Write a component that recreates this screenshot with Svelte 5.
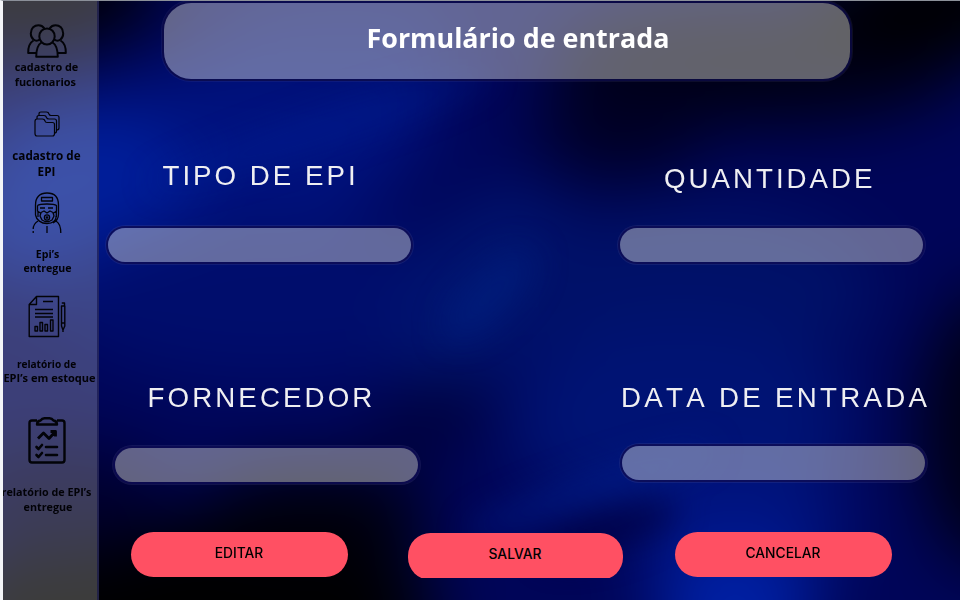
<script>
  const menu = [
    { icon: 'people', lines: ['cadastro de', 'fucionarios'] },
    { icon: 'folders', lines: ['cadastro de', 'EPI'] },
    { icon: 'worker', lines: ['Epi’s', 'entregue'] },
    { icon: 'report', lines: ['relatório de', 'EPI’s em estoque'] },
    { icon: 'clipboard', lines: ['relatório de EPI’s', 'entregue'] }
  ];
  const fields = [
    { id: 'tipo', label: 'TIPO DE EPI' },
    { id: 'quantidade', label: 'QUANTIDADE' },
    { id: 'fornecedor', label: 'FORNECEDOR' },
    { id: 'data', label: 'DATA DE ENTRADA' }
  ];
  const actions = ['EDITAR', 'SALVAR', 'CANCELAR'];
</script>

<div class="screen">
  <svg class="backdrop" viewBox="0 0 960 600" aria-hidden="true">
    <defs>
      <filter id="soft" filterUnits="userSpaceOnUse" x="-200" y="-200" width="1360" height="1000" color-interpolation-filters="sRGB"><feGaussianBlur stdDeviation="34" /></filter>
      <filter id="softer" filterUnits="userSpaceOnUse" x="-200" y="-200" width="1360" height="1000" color-interpolation-filters="sRGB"><feGaussianBlur stdDeviation="16" /></filter>
    </defs>
    <g filter="url(#soft)">
      <rect x="-150" y="-150" width="1260" height="900" fill="#000558" />
      <ellipse cx="190" cy="170" rx="260" ry="105" fill="#00127e" transform="rotate(-18 190 170)" />
      <ellipse cx="80" cy="190" rx="110" ry="85" fill="#001e9a" />
      <ellipse cx="270" cy="300" rx="220" ry="85" fill="#000d6c" />
      <ellipse cx="480" cy="290" rx="65" ry="115" fill="#001570" transform="rotate(35 480 290)" />
      <ellipse cx="345" cy="35" rx="120" ry="45" fill="#000e70" />
      <ellipse cx="760" cy="60" rx="210" ry="65" fill="#000014" />
      <ellipse cx="620" cy="130" rx="85" ry="50" fill="#000024" />
      <ellipse cx="960" cy="0" rx="150" ry="50" fill="#000" />
      <ellipse cx="690" cy="290" rx="190" ry="85" fill="#001168" />
      <ellipse cx="680" cy="420" rx="175" ry="100" fill="#001374" />
      <ellipse cx="740" cy="530" rx="110" ry="60" fill="#001380" />
      <ellipse cx="735" cy="615" rx="80" ry="70" fill="#0020a4" />
      <ellipse cx="995" cy="430" rx="75" ry="140" fill="#000014" />
      <ellipse cx="10" cy="-10" rx="150" ry="65" fill="#000008" />
      <ellipse cx="190" cy="615" rx="250" ry="90" fill="#000" />
      <ellipse cx="310" cy="520" rx="120" ry="50" fill="#00000a" />
      <ellipse cx="430" cy="420" rx="65" ry="30" fill="#000034" transform="rotate(-25 430 420)" />
      <ellipse cx="60" cy="500" rx="110" ry="55" fill="#00002e" />
    </g>
    <g filter="url(#softer)">
      <ellipse cx="490" cy="295" rx="22" ry="60" fill="#001f80" opacity=".6" transform="rotate(45 490 295)" />
      <ellipse cx="320" cy="130" rx="180" ry="16" fill="#00229c" opacity=".35" transform="rotate(-18 320 130)" />
      <ellipse cx="590" cy="490" rx="130" ry="15" fill="#001c88" opacity=".6" transform="rotate(-19 590 490)" />
      <ellipse cx="610" cy="530" rx="70" ry="20" fill="#000040" opacity=".7" transform="rotate(-18 610 530)" />
    </g>
  </svg>

  <nav class="sidebar">
    {#each menu as item}
      <a class="item {item.icon}" href="#{item.icon}">
        {#if item.icon === 'people'}
          <svg width="40" height="34" viewBox="0 0 40 34" stroke-width="2">
            <path d="M12.800 15.500C8 19 3.800 14 3.800 9.500C3.800 4 7.500 1.300 11.500 1.300C14 1.300 16 2.500 17.300 4.300M27.200 15.500C32 19 36.200 14 36.200 9.500C36.200 4 32.500 1.300 28.500 1.300C26 1.300 24 2.500 22.700 4.300" />
            <path d="M6.500 16.500C3 18.500 1.100 22.500 1.200 29H9.500M33.500 16.500C37 18.500 38.900 22.500 38.800 29H30.500" />
            <path d="M20 4.500C15.500 4.500 12.300 8 12.300 12.500S16 20.500 20 20.500S27.700 17 27.700 12.500S24.500 4.500 20 4.500Z" />
            <path d="M14.500 18.500C11 20.500 9.300 24.500 9.200 32.700H30.800C30.700 24.500 29 20.500 25.500 18.500" />
          </svg>
        {:else if item.icon === 'folders'}
          <svg width="26" height="26" viewBox="0 0 26 26" stroke-width="1.2">
            <path d="M1 10.500Q1 8 3 8H8.500Q10.500 8 11 10Q11.300 11.500 13 11.500H18.500Q20.500 11.500 20.500 13.500V22.500Q20.500 25 18.500 25H3Q1 25 1 22.500Z" />
            <path d="M3 8V6.500Q3 4.500 5 4.500H10Q12 4.500 12.500 6.500Q13 8 15 8H20.500Q22.500 8 22.500 10V20Q22.500 22 20.500 22" />
            <path d="M5 4.500V3Q5 1 7 1H12.500Q14.500 1 15 3Q15.500 4.500 17 4.500H23Q25 4.500 25 6.500V17Q25 19 22.500 19" />
          </svg>
        {:else if item.icon === 'worker'}
          <svg width="30" height="42" viewBox="0 0 30 42" stroke-width="1.3">
            <path d="M3.500 23V13C3.500 5 8 1 15 1S26.500 5 26.500 13V22C26.500 27 24 29.500 21 31M3.500 23C4.500 28 9 31.500 15 31.500S24 29 24.300 24" />
            <path d="M9.500 5.500H20.500V9H9.500ZM5.500 13.500C8 11.500 22 11.500 24.500 13.500V19L21 21.500M5.500 13.500V19L9 21.500M8 16H13M16 16H21M6 19V25M24.300 19V25" />
            <path d="M9 20.500L12 19L15 21L18 19L21 20.500L22 24L20 28L17 29.500H13L10 28L8 24Z" />
            <circle cx="15" cy="25.500" r="2.600" /><circle cx="15" cy="25.500" r=".7" />
            <path d="M6 29C3 31 1.200 34 1.200 37M1.200 39V41M24 29C27.500 31 28.800 34 28.800 41M15 34V41" />
          </svg>
        {:else if item.icon === 'report'}
          <svg width="38" height="43" viewBox="0 0 38 43" stroke-width="1.4">
            <path d="M8.500 1.500H30.500V41.500H1.200V9.500ZM8.500 1.500V9.500H1.200" />
            <path d="M15 6.500H25M7 14.500H25M7 18.500H25M7 22H25" />
            <path d="M7 36V31.500H9.500V36ZM12 36V27.500H14.500V36ZM17 36V29.500H19.500V36ZM22.500 36V25H25V36Z" />
            <path d="M33.500 11V31L35 35L36.800 31V11ZM33.800 8H36.500V11M33.500 28H36.800M35 35V37" />
          </svg>
        {:else}
          <svg width="38" height="47" viewBox="0 0 38 47" stroke-width="2.4">
            <path d="M9 3.500H4Q1.500 3.500 1.500 6V43Q1.500 45.500 4 45.500H34Q36.500 45.500 36.500 43V6Q36.500 3.500 34 3.500H29" />
            <path d="M9 7.500Q9 4 12.500 3.500Q14 1.300 16.500 1.300H21.500Q24 1.300 25.500 3.500Q29 4 29 7.500Z" />
            <path d="M10 21.500L15.500 16L21 21.500L27 15M22.500 14.500H27.500V19.500" stroke-width="2.800" />
            <path d="M8.500 30L10.500 32L14 28M8.500 38L10.500 40L14 36M18 30H29M18 38H29" stroke-width="2.600" stroke-linecap="round" />
          </svg>
        {/if}
        <span class="caption">
          {#each item.lines as line}<span class="line">{line}</span>{/each}
        </span>
      </a>
    {/each}
  </nav>

  <main>
    <header><h1>Formulário de entrada</h1></header>
    <form>
      <div class="fields">
        {#each fields as field}
          <div class="field {field.id}">
            <label for={field.id}>{field.label}</label>
            <input id={field.id} type="text" />
          </div>
        {/each}
      </div>
      <div class="actions">
        {#each actions as action}
          <button type="button" class={action.toLowerCase()}>{action}</button>
        {/each}
      </div>
    </form>
  </main>
</div>

<style>
  :global(body) { margin: 0; overflow: hidden; }
  .screen {
    position: relative;
    display: flex;
    box-sizing: border-box;
    width: 960px;
    height: 600px;
    overflow: hidden;
    border-left: 3px solid #f4f5f8;
    border-top: 1px solid #8b9099;
  }
  .backdrop { position: absolute; left: -3px; top: -1px; width: 960px; height: 600px; }
  .sidebar {
    position: relative;
    display: flex;
    flex-direction: column;
    flex: none;
    width: 94px;
    height: 600px;
    background: rgba(214, 214, 208, 0.28);
    border-right: 2px solid rgba(20, 20, 75, 0.65);
  }
  .item {
    display: flex;
    flex-direction: column;
    align-items: center;
    color: #020207;
    text-decoration: none;
    font: 700 10.9px/15px 'Open Sans', sans-serif;
  }
  .item svg { display: block; margin-right: 7px; fill: none; stroke: #020308; stroke-linejoin: round; }
  .caption { display: flex; flex-direction: column; align-items: center; white-space: nowrap; }
  .people { margin-top: 23px; font-size: 10.9px; }
  .people .caption { margin-top: 1px; margin-right: 7px; align-items: flex-start; }
  .folders { margin-top: 22px; font-size: 11.7px; line-height: 16px; }
  .folders .caption { margin-top: 10px; margin-right: 7px; }
  .worker { margin-top: 13px; font-size: 10.6px; line-height: 14px; }
  .worker .caption { margin-top: 13px; margin-right: 5px; }
  .report { margin-top: 20px; line-height: 14px; }
  .report .caption { margin-top: 19px; margin-right: 1px; font-size: 11.05px; }
  .report .line:first-child { font-size: 10.1px; margin-right: 6px; }
  .clipboard { margin-top: 32px; font-size: 10.75px; }
  .clipboard .caption { margin-top: 21px; margin-right: 7px; }
  .clipboard .line:last-child { margin-left: 3px; }

  main { position: relative; flex: 1; display: flex; flex-direction: column; }
  header {
    display: flex;
    align-items: center;
    justify-content: center;
    box-sizing: border-box;
    width: 686px;
    height: 76px;
    margin: 2px 0 0 65px;
    padding: 0 0 6px 22px;
    border-radius: 27px;
    background: rgba(245, 245, 236, 0.4);
    box-shadow: 0 0 0 2px rgba(10, 8, 70, 0.75), 0 0 0 3px rgba(90, 90, 150, 0.15);
  }
  h1 { margin: 0; color: #fff; font: 700 26.9px/36px 'Open Sans', sans-serif; white-space: nowrap; }
  form { display: flex; flex-direction: column; }
  .fields { display: grid; grid-template-columns: 512px 340px; grid-template-rows: 222px 231px; }
  .field { display: flex; flex-direction: column; align-items: flex-start; }
  label {
    color: #efeff2;
    font: 400 27.7px/32px 'Liberation Sans', Arial, sans-serif;
    font-kerning: none;
    letter-spacing: 3px;
    white-space: nowrap;
  }
  input {
    box-sizing: border-box;
    width: 303px;
    height: 34px;
    padding: 0 16px;
    border: 0;
    border-radius: 17px;
    outline: none;
    color: #fff;
    background: rgba(245, 245, 236, 0.4);
    box-shadow: 0 0 0 2px rgba(10, 8, 80, 0.75), 0 0 0 3px rgba(90, 90, 150, 0.2);
  }
  .tipo label { margin: 81px 0 0 63.5px; }
  .tipo input { margin: 36px 0 0 9px; }
  .quantidade label { margin: 84px 0 0 53px; }
  .quantidade input { margin: 33px 0 0 9px; }
  .fornecedor label { margin: 81px 0 0 48.5px; letter-spacing: 3.1px; }
  .fornecedor input { margin: 34px 0 0 16px; }
  .data label { margin: 81px 0 0 10px; letter-spacing: 3.28px; }
  .data input { margin: 32px 0 0 11px; }
  .actions { display: flex; align-items: flex-start; padding-left: 32px; }
  button {
    width: 217px;
    height: 45px;
    padding: 0 1px 3px 0;
    border: 0;
    border-radius: 22.500px;
    background: #ff5063;
    color: #000;
    font: 500 13.8px/20px Inter, sans-serif;
  }
  .salvar { width: 215px; height: 47px; margin: 1px 52px 0 60px; padding-bottom: 6px; clip-path: inset(0 0 2px 0); }
</style>
